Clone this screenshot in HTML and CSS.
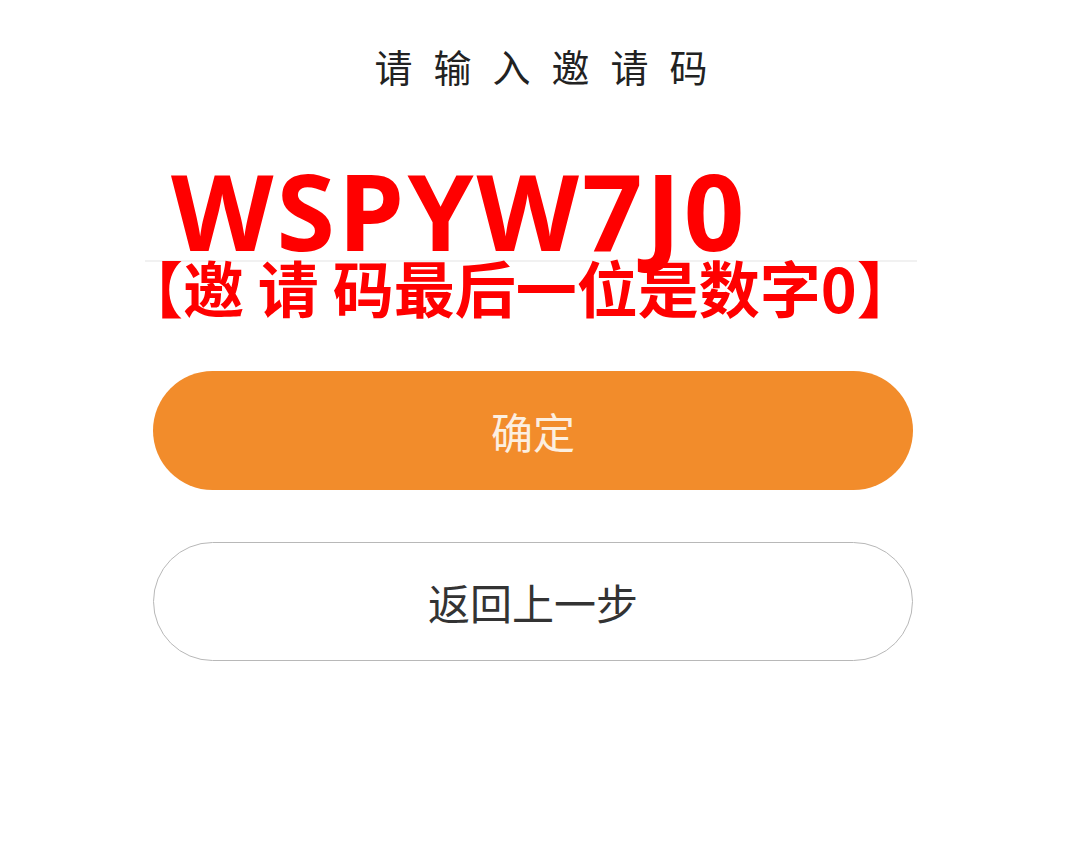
FILE: index.html
```html
<!DOCTYPE html>
<html lang="zh-CN">
<head>
<meta charset="utf-8">
<title>请输入邀请码</title>
<link rel="stylesheet" href="styles.css">
</head>
<body>
<div class="page">
  <h1 class="title">请输入邀请码</h1>
  <div class="panel">
    <div class="code-field">
      <div class="code">WSPYW7J0</div>
    </div>
    <div class="note">【邀 请 码最后一位是数字0】</div>
    <div class="actions">
      <button class="btn btn-primary">确定</button>
      <button class="btn btn-outline">返回上一步</button>
    </div>
  </div>
</div>
</body>
</html>
```
FILE: styles.css
```css
* { box-sizing: border-box; }
html, body { margin: 0; padding: 0; background: #fff; }
body {
  width: 1066px;
  height: 864px;
  font-family: "Noto Sans CJK SC", "Noto Sans", sans-serif;
}
.page {
  display: flex;
  flex-direction: column;
  align-items: center;
  padding-top: 38px;
}
.title {
  margin: 0;
  font-size: 38px;
  font-weight: 400;
  line-height: 56px;
  letter-spacing: 21px;
  padding-left: 21px;
  color: #222;
  margin-left: 16px;
}
.panel {
  width: 760px;
  display: flex;
  flex-direction: column;
  margin-top: 52px;
}
.code-field {
  border-bottom: 2px solid #f1f1f1;
  margin-left: -8px;
  margin-right: -4px;
  padding-left: 26px;
  height: 116px;
  display: flex;
  align-items: flex-end;
}
.code {
  font-family: "Open Sans", "Liberation Sans", sans-serif;
  font-weight: 700;
  font-size: 106px;
  line-height: 96px;
  color: #ff0000;
  letter-spacing: 3px;
  margin-bottom: 2px;
}
.note {
  font-family: "Noto Sans CJK SC", sans-serif;
  font-weight: 700;
  font-size: 61px;
  line-height: 50px;
  color: #ff0000;
  margin-left: -31px;
  white-space: nowrap;
  margin-top: 0;
}
.actions {
  display: flex;
  flex-direction: column;
  gap: 52px;
  margin-top: 59px;
}
.btn {
  width: 760px;
  height: 119px;
  border-radius: 60px;
  font-family: "Noto Sans CJK SC", sans-serif;
  font-size: 42px;
  font-weight: 400;
  cursor: pointer;
}
.btn-primary {
  background: #f28c2b;
  border: none;
  color: #fcefe0;
}
.btn-outline {
  background: #fff;
  border: 1.5px solid #b8b8b8;
  color: #333;
}
```
